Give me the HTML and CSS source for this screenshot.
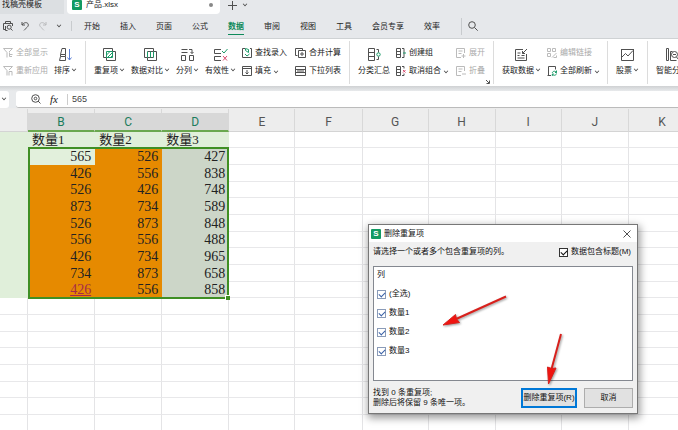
FILE: index.html
```html
<!DOCTYPE html>
<html lang="zh-CN">
<head>
    <meta charset="UTF-8">
    <meta name="viewport" content="width=device-width, initial-scale=1.0">
    <title>产品.xlsx</title>
    <link rel="stylesheet" href="styles.css">
</head>
<body>
    <div class="app">
        <div class="tabs">
            <a class="tab" href="#">找稿壳模板</a>
            <a class="tab active" href="#">
                <span class="logo">S</span>
                <span class="tab-name">产品.xlsx</span>
                <span class="dot"></span>
            </a>
            <button class="icon-btn" aria-label="新建">
                <svg width="9" height="9" viewBox="0 0 9 9"><path d="M4.5 0v9M0 4.500h9"/></svg>
            </button>
            <button class="icon-btn" aria-label="标签列表"><i class="caret"></i></button>
        </div>

        <nav class="menu">
            <div class="quick">
                <button class="icon-btn" aria-label="打印预览">
                    <svg width="10" height="10" viewBox="0 0 10 10"><path d="M2.500 2.500v-2h5v2M3 8.500H.5v-6h9v2.500M2.500 5v4.500h2"/><circle cx="6.200" cy="6.200" r="2"/><path d="M7.700 7.700l1.800 1.800"/></svg>
                </button>
                <button class="icon-btn" aria-label="撤销">
                    <svg width="9" height="10" viewBox="0 0 9 10"><path d="M1 1v3h3M1 4c2-3 5.500-3 6.200-.8C8 5.500 5 7 3 9.300"/></svg>
                </button>
                <button class="icon-btn faded" aria-label="恢复">
                    <svg width="9" height="10" viewBox="0 0 9 10"><path d="M8 1v3H5M8 4C6 1 2.500 1 1.800 3.200 1 5.500 4 7 6 9.300"/></svg>
                </button>
                <button class="icon-btn" aria-label="更多"><i class="caret"></i></button>
            </div>
            <div class="menu-items">
                <a href="#">开始</a>
                <a href="#">插入</a>
                <a href="#">页面</a>
                <a href="#">公式</a>
                <a href="#" class="current">数据</a>
                <a href="#">审阅</a>
                <a href="#">视图</a>
                <a href="#">工具</a>
                <a href="#">会员专享</a>
                <a href="#">效率</a>
            </div>
            <button class="icon-btn search" aria-label="搜索">
                <svg width="10" height="10" viewBox="0 0 10 10"><circle cx="4" cy="4" r="3.300"/><path d="M6.500 6.500l3.200 3.200"/></svg>
            </button>
        </nav>

        <div class="ribbon">
            <div class="group">
                <div class="stack">
                    <button class="small" disabled>
                        <svg width="10" height="10" viewBox="0 0 10 10"><path d="M.5.500h9L6 4M.5.500L4 4.500v5M6.500 4.500v4h2.500M6 6.500h3.500"/></svg>全部显示
                    </button>
                    <button class="small" disabled>
                        <svg width="10" height="10" viewBox="0 0 10 10"><path d="M.5.500h9L6 4M.5.500L4 4.500v5M6 9.500v-4h3v4"/></svg>重新应用
                    </button>
                </div>
                <button class="big">
                    <svg width="13" height="13" viewBox="0 0 13 13"><path d="M1.500 6.500L3 .5h3.500v6zM.5 12.500l1-4h5v4zM1.500 6.500v2M6.500 6.500v2"/><path class="blue" d="M10.500 1v11M8.500 9.500l2 2.500 2-2.500"/></svg>
                    <span>排序<i class="caret"></i></span>
                </button>
            </div>

            <div class="group">
                <button class="big">
                    <svg width="13" height="13" viewBox="0 0 13 13"><path d="M3.500 9.500h-3v-9h9v3M9.500 3.500h3v9h-9v-3"/><path class="green" d="M3.500 3.500h6v6h-6zM3.500 7l3.500-3.500M4.500 9.500l5-5M7.500 9.500l2-2"/></svg>
                    <span>重复项<i class="caret"></i></span>
                </button>
                <button class="big">
                    <svg width="13" height="13" viewBox="0 0 13 13"><path d="M3.500 9.500h-3v-9h9v3M9.500 3.500h3v9h-9v-3M3.500 3.500h6M3.500 9.500h6"/><path class="green" d="M3.500 3.500v6M9.500 3.500v6M6.500 3.500v6"/></svg>
                    <span>数据对比<i class="caret"></i></span>
                </button>
                <button class="big">
                    <svg width="13" height="13" viewBox="0 0 13 13"><path d="M.5 1.500h6M.5 4.500h6M8 1.500h3v4M9.500 4L11 5.500 12.500 4M.5 7.500h4v5h-4zM8.500 7.500h4v5h-4z"/></svg>
                    <span>分列<i class="caret"></i></span>
                </button>
                <button class="big">
                    <svg width="14" height="13" viewBox="0 0 14 13"><path d="M7 1.500H.5v4H7M7 8.500H.5v4H7"/><path class="green" d="M8 3l2 2 3.500-4"/><path class="red" d="M9 8l4 4.500M13 8l-4 4.500"/></svg>
                    <span>有效性<i class="caret"></i></span>
                </button>
                <div class="stack">
                    <button class="small">
                        <svg width="10" height="10" viewBox="0 0 10 10"><path d="M3 .5H.5v9h9v-9H8"/><path class="green" d="M3.500.500v2l3 2v-3zM3 6l2 2 2.500-2"/></svg>查找录入
                    </button>
                    <button class="small">
                        <svg width="10" height="10" viewBox="0 0 10 10"><path d="M.5.500h9v9h-9zM.5 2.500h9M5 4v4M3.500 6.500L5 8l1.500-1.500"/></svg>填充<i class="caret"></i>
                    </button>
                </div>
                <div class="stack wide">
                    <button class="small">
                        <svg width="11" height="10" viewBox="0 0 11 10"><path d="M2.500 7.500h-2v-7h7v2M3.500 2.500h7v7h-7zM7 4v4M5 6h4"/></svg>合并计算
                    </button>
                    <button class="small">
                        <svg width="11" height="10" viewBox="0 0 11 10"><path d="M.5.500h10v3H.5zM.5 6.500h10v3H.5zM.5 3v4M10.500 3v4M2 5h7"/></svg>下拉列表
                    </button>
                </div>
            </div>

            <div class="group outline">
                <button class="big">
                    <svg width="13" height="13" viewBox="0 0 13 13"><path d="M.5.500h6v12h-6zM.5 4.500h6M.5 8.500h6"/><path d="M8.500 1.500h2v3M8.500 11.500h2v-3"/><circle class="green" cx="10.500" cy="6.500" r="1.700"/></svg>
                    <span>分类汇总</span>
                </button>
                <div class="stack">
                    <button class="small">
                        <svg width="10" height="10" viewBox="0 0 10 10"><path d="M.5.500h4v9h-4zM.5 3.500h4M.5 6.500h4M6 .5h2v9H6"/><path class="green" d="M7 5h3"/></svg>创建组
                    </button>
                    <button class="small">
                        <svg width="10" height="10" viewBox="0 0 10 10"><path d="M.5.500h4v9h-4zM.5 3.500h4M.5 6.500h4M6 .5h2v2M6 9.500h2v-2"/><path class="red" d="M7 4l2.500 2.500M9.500 4L7 6.500"/></svg>取消组合<i class="caret"></i>
                    </button>
                </div>
                <div class="stack wide">
                    <button class="small" disabled>
                        <svg width="10" height="10" viewBox="0 0 10 10"><path d="M5 9.500H.5v-9h8V5M2.500 3h4M2.500 5.500h3M7.500 6v4M5.500 8h4"/></svg>展开
                    </button>
                    <button class="small" disabled>
                        <svg width="10" height="10" viewBox="0 0 10 10"><path d="M5 9.500H.5v-9h8V5M2.500 3h4M2.500 5.500h3M6 8h4"/></svg>折叠
                    </button>
                </div>
                <svg class="launcher" width="4" height="4" viewBox="0 0 4 4"><path d="M0 0l3 3M3.500.500v3h-3"/></svg>
            </div>

            <div class="group">
                <button class="big">
                    <svg width="13" height="13" viewBox="0 0 13 13"><path d="M8 1.500H.5v11h11V6M2.500 5h3M2.500 7.500h2M6.500 7.500h3M2.500 10h7M12 1L7.500 5.500M7.500 3v2.500H10"/></svg>
                    <span>获取数据<i class="caret"></i></span>
                </button>
                <div class="stack">
                    <button class="small" disabled>
                        <svg width="10" height="10" viewBox="0 0 10 10"><path d="M.5.500h3v3h-3zM5.500.500h3v3h-3zM.5 5.500h3v3h-3zM5 9.500l4.500-4.500M6.500 9.500h3v-2"/></svg>编辑链接
                    </button>
                    <button class="small">
                        <svg width="10" height="10" viewBox="0 0 10 10"><path d="M4 9.500H.5M1.500 9.500v-9h7v3"/><path class="green" d="M9.500 6.500c-1-2-4-1.500-4.200.5M5.300 8c1 2 4 1.500 4.200-.5M9.500 4.500v2H8M5.300 10V8h1.500"/></svg>全部刷新<i class="caret"></i>
                    </button>
                </div>
            </div>

            <div class="group">
                <button class="big">
                    <svg width="13" height="13" viewBox="0 0 13 13"><path d="M.5 1v11.500h12V1M0 1.500h13M1 9l3.500-3.500L7 8l5-5.500"/></svg>
                    <span>股票<i class="caret"></i></span>
                </button>
            </div>

            <div class="group">
                <button class="big">
                    <svg width="13" height="13" viewBox="0 0 13 13"><path d="M.5.500h2v12h-2zM4.500 12.500v-9h2M4.500 12.500h6"/><circle cx="8.500" cy="6.500" r="3"/><path d="M10.500 9l2 2.500M7 6.500h3"/></svg>
                    <span>智能分析</span>
                </button>
            </div>
        </div>

        <div class="formula">
            <button class="name-box" aria-label="名称框"><i class="caret"></i></button>
            <div class="formula-box">
                <svg width="10" height="10" viewBox="0 0 10 10"><circle cx="4.500" cy="4.500" r="3.800"/><circle cx="4.500" cy="4.500" r="1.300"/><path d="M7 7l2.500 2.500"/></svg>
                <label class="fx" for="formula-input">fx</label>
                <input type="text" id="formula-input" value="565">
            </div>
        </div>

        <div class="sheet">
            <table>
                <colgroup>
                    <col class="col-a">
                    <col class="col-odd"><col class="col-odd"><col class="col-odd">
                    <col class="col-even"><col class="col-odd">
                    <col class="col-even"><col class="col-odd">
                    <col class="col-even"><col class="col-odd">
                    <col class="col-odd">
                </colgroup>
                <thead>
                    <tr>
                        <th></th>
                        <th class="selected">B</th>
                        <th class="selected">C</th>
                        <th class="selected">D</th>
                        <th>E</th>
                        <th>F</th>
                        <th>G</th>
                        <th>H</th>
                        <th>I</th>
                        <th>J</th>
                        <th>K</th>
                    </tr>
                </thead>
                <tbody id="cells"></tbody>
            </table>
            <div class="selection"></div>
        </div>
    </div>

    <div class="dialog" role="dialog" aria-labelledby="dialog-title">
        <div class="dialog-title">
            <span class="logo">S</span>
            <span id="dialog-title">删除重复项</span>
            <button class="icon-btn close" aria-label="关闭">
                <svg width="8" height="8" viewBox="0 0 8 8"><path d="M.5.500l7 7M7.500.500l-7 7"/></svg>
            </button>
        </div>
        <div class="dialog-body">
            <div class="hint">
                <span>请选择一个或者多个包含重复项的列。</span>
                <label class="check dark"><input type="checkbox" checked>数据包含标题(M)</label>
            </div>
            <div class="list">
                <div class="list-head">列</div>
                <label class="check"><input type="checkbox" checked>(全选)</label>
                <label class="check"><input type="checkbox" checked>数量1</label>
                <label class="check"><input type="checkbox" checked>数量2</label>
                <label class="check"><input type="checkbox" checked>数量3</label>
            </div>
            <div class="dialog-footer">
                <p>找到 0 条重复项;<br>删除后将保留 9 条唯一项。</p>
                <button class="btn primary">删除重复项(R)</button>
                <button class="btn">取消</button>
            </div>
        </div>
        <svg class="arrows" width="269" height="190" viewBox="369 225 269 190">
            <path d="M506 296.500L455 319.500" />
            <path class="head" d="M443 325l12.500-10.500 1 4.500 3 3.500z"/>
            <path d="M561 334L551 371"/>
            <path class="head" d="M548.500 384l-1-17 4 1.500 4.500-.5z"/>
        </svg>
    </div>

    <script>
        const rows = [
            [565, 526, 427],
            [426, 556, 838],
            [526, 426, 748],
            [873, 734, 589],
            [526, 873, 848],
            [556, 556, 488],
            [426, 734, 965],
            [734, 873, 658],
            [426, 556, 858]
        ];
        const cells = document.getElementById("cells");

        function addRow(values, rowClass) {
            const tr = document.createElement("tr");
            tr.className = rowClass;
            for (let i = 0; i < 11; i++) {
                const td = document.createElement("td");
                if (i > 0 && i <= values.length) {
                    td.textContent = values[i - 1];
                }
                tr.appendChild(td);
            }
            cells.appendChild(tr);
        }

        addRow(["数量1", "数量2", "数量3"], "titles");
        rows.forEach(row => addRow(row, "data"));

        // Empty rows below the data
        for (let i = 0; i < 8; i++) {
            addRow([], "empty");
        }
    </script>
</body>
</html>
```

FILE: styles.css
```css
* {
    box-sizing: border-box;
}
body {
    margin: 0;
    height: 100vh;
    overflow: hidden;
    position: relative;
    font-family: "Liberation Sans", "Noto Sans CJK SC", sans-serif;
    font-size: 8px;
    line-height: 10px;
    color: #222;
    background: #fff;
}
a {
    color: inherit;
    text-decoration: none;
}
button {
    font: inherit;
    color: inherit;
    background: none;
    border: none;
    padding: 0;
    white-space: nowrap;
}
svg {
    display: block;
    flex: none;
    fill: none;
    stroke: #505050;
    stroke-width: 1;
}
.green {
    stroke: #1b9a68;
}
.blue {
    stroke: #5a7fd6;
}
.red {
    stroke: #d8486c;
}
.caret {
    display: inline-block;
    width: 4px;
    height: 4px;
    margin: 0 1px 2px 2px;
    border: solid #444;
    border-width: 0 1px 1px 0;
    transform: rotate(45deg) scale(0.8);
}
.icon-btn {
    display: flex;
    align-items: center;
}
.logo {
    width: 10px;
    height: 10px;
    border-radius: 1px;
    background: #129a62;
    color: #fff;
    font-weight: bold;
    text-align: center;
}

/* Top bars */
.app {
    height: 100%;
    overflow: hidden;
}
.tabs {
    display: flex;
    align-items: center;
    height: 14px;
    background: #e6e8eb;
}
.tab {
    display: flex;
    align-items: center;
    width: 64px;
    height: 14px;
    padding: 0 2px 4px;
    background: #dcdfe2;
}
.tab.active {
    width: 153px;
    margin: 0 8px 0 3px;
    padding: 0 7px 4px 5px;
    gap: 4px;
    background: #fff;
    border-radius: 0 0 4px 4px;
}
.tab-name {
    flex: 1;
}
.dot {
    width: 4px;
    height: 4px;
    border-radius: 50%;
    background: #888;
}
.tabs .icon-btn {
    margin-right: 4px;
    padding-bottom: 4px;
}
.menu {
    display: flex;
    align-items: center;
    height: 25px;
    padding-left: 3px;
    background: #e6e8eb;
    border-bottom: 1px solid #cfd2d4;
}
.quick {
    display: flex;
    align-items: center;
    gap: 8px;
    width: 69px;
    border-right: 1px solid #c8cbce;
}
.faded {
    opacity: 0.3;
}
.menu-items {
    display: flex;
    gap: 20px;
    padding: 0 21px 0 12px;
    border-right: 1px solid #c8cbce;
}
.menu-items a {
    height: 17px;
    padding-top: 4px;
    white-space: nowrap;
}
.menu-items .current {
    color: #0e8a5a;
    font-weight: bold;
    border-bottom: 1px solid #0e8a5a;
}
.search {
    margin-left: 6px;
}

/* Ribbon */
.ribbon {
    display: flex;
    height: 47px;
    padding: 2px 0 2px 3px;
    overflow: hidden;
    background: #fff;
}
.group {
    display: flex;
    flex: none;
    gap: 6px;
    padding: 0 8px;
    border-right: 1px solid #dcdcdc;
}
.group:first-child {
    padding-left: 0;
}
.group:last-child {
    border-right: none;
}
.stack {
    display: flex;
    flex-direction: column;
    gap: 8px;
    padding-top: 7px;
}
.stack.wide {
    margin-left: 2px;
}
.small {
    display: flex;
    align-items: center;
    height: 10px;
    gap: 3px;
}
.small .caret {
    margin: 0 0 1px;
}
.small:disabled {
    color: #aaa;
}
.small:disabled svg {
    stroke: #bbb;
}
.big {
    display: flex;
    flex-direction: column;
    align-items: center;
    gap: 5px;
    height: 36px;
    padding-top: 7px;
}
.outline {
    position: relative;
}
.launcher {
    position: absolute;
    right: 3px;
    bottom: 0;
}

/* Formula bar */
.formula {
    display: flex;
    gap: 7px;
    height: 23px;
    padding: 5px 0 0;
    background: linear-gradient(#cfd1d3, #e8eaec 5px);
    border-bottom: 1px solid #ececec;
}
.name-box {
    width: 9px;
    height: 17px;
    background: #fff;
    border-radius: 0 3px 3px 0;
}
.name-box .caret {
    margin-left: 0;
}
.formula-box {
    display: flex;
    flex: 1;
    align-items: center;
    height: 17px;
    padding-left: 15px;
    background: #fff;
    border-bottom: 1px solid #bbb;
    border-radius: 3px 0 0 3px;
}
.fx {
    width: 18px;
    margin: 0 0 0 9px;
    font: italic 11px/11px "Liberation Serif", serif;
    border-right: 1px solid #ccc;
}
.formula-box input {
    flex: 1;
    min-width: 0;
    padding: 0 4px;
    border: none;
    outline: none;
    font: 9px "Liberation Sans", sans-serif;
    color: #444;
}

/* Sheet */
.sheet {
    position: relative;
}
table {
    table-layout: fixed;
    width: 696px;
    border-collapse: separate;
    border-spacing: 0;
}
.col-a {
    width: 28px;
}
.col-odd {
    width: 67px;
}
.col-even {
    width: 66px;
}
th {
    height: 23px;
    padding: 4px 0 0;
    background: #ededed;
    border-right: 1px solid #d8d8d8;
    border-bottom: 1px solid #d4d4d4;
    font: 12px/16px Roboto, sans-serif;
    color: #555;
}
th.selected {
    background: linear-gradient(#ededed 4px, #d8d8d8 4px);
    border-right-color: #d8d8d8;
    border-bottom: 2px solid #6aa84f;
    color: #1c7c5c;
}
td {
    height: 17px;
    padding: 0 3px;
    overflow: hidden;
    white-space: nowrap;
    text-align: right;
    border-right: 1px solid #e4e4e6;
    border-bottom: 1px solid #e8e8ea;
    font: 14px/15px "Liberation Serif", "Noto Sans CJK SC", serif;
}
tr:nth-child(3n+1) td {
    height: 16px;
    line-height: 15px;
}
.titles td {
    padding: 0 4px;
    text-align: left;
    font-size: 13px;
}
.titles td:nth-child(-n+4),
.data td:first-child {
    background: #e0efda;
    border-color: #e0efda;
}
.data td:nth-child(2),
.data td:nth-child(3) {
    background: #e68a00;
    border-color: #e68a00;
}
.data td:nth-child(4) {
    background: #ccd6c8;
    border-color: #ccd6c8;
}
.titles + .data td:nth-child(2) {
    background: #e2f0dc;
    border-color: #e2f0dc;
}
.data:nth-child(10) td:nth-child(2) {
    color: #a52a4a;
    text-decoration: underline;
}
.selection {
    position: absolute;
    left: 28px;
    top: 38px;
    width: 201px;
    height: 152px;
    border: 2px solid #3f8f24;
}
.selection::after {
    content: "";
    position: absolute;
    right: -3px;
    bottom: -3px;
    width: 4px;
    height: 4px;
    background: #3f8f24;
    border: solid #fff;
    border-width: 1px 0 0 1px;
}

/* Dialog */
.dialog {
    position: absolute;
    left: 368px;
    top: 224px;
    width: 270px;
    background: #f0f0f0;
    border: 1px solid #777;
    box-shadow: 1px 3px 8px 1px rgba(0, 0, 0, 0.4);
    color: #111;
}
.dialog-title {
    display: flex;
    align-items: center;
    gap: 3px;
    height: 17px;
    padding: 0 6px 0 2px;
    background: #fff;
}
.close {
    margin-left: auto;
}
.dialog-body {
    padding: 5px 4px 5px;
}
.hint {
    display: flex;
    justify-content: space-between;
    padding-right: 2px;
    margin-bottom: 9px;
}
.check {
    display: flex;
    align-items: center;
    gap: 3px;
    height: 10px;
}
.check input {
    appearance: none;
    width: 9px;
    height: 9px;
    margin: 0;
    border: 1px solid #8a9bb8;
    background: #fff;
    display: grid;
    place-items: center;
}
.check input:checked::after {
    content: "";
    width: 5px;
    height: 3px;
    margin-bottom: 1px;
    border: solid #3a62a8;
    border-width: 0 0 1px 1px;
    transform: rotate(-45deg);
}
.check.dark input {
    border-color: #333;
}
.check.dark input:checked::after {
    border-color: #111;
}
.list {
    display: flex;
    flex-direction: column;
    gap: 9px;
    height: 115px;
    padding: 3px;
    background: #fff;
    border: 1px solid #848890;
}
.dialog-footer {
    display: flex;
    gap: 7px;
    align-items: center;
    margin-top: 7px;
}
.dialog-footer p {
    flex: 1;
    margin: 0;
    white-space: nowrap;
}
.btn {
    width: 49px;
    height: 20px;
    background: #e1e1e1;
    border: 1px solid #adadad;
}
.btn.primary {
    width: 56px;
    border: 2px solid #0078d7;
}
.arrows {
    position: absolute;
    left: 0;
    top: 0;
    stroke: #d8201c;
    stroke-width: 2;
    pointer-events: none;
    filter: drop-shadow(1px 1px 1px rgba(0, 0, 0, 0.4));
}
.head {
    fill: #f01410;
    stroke-width: 1;
}
```
